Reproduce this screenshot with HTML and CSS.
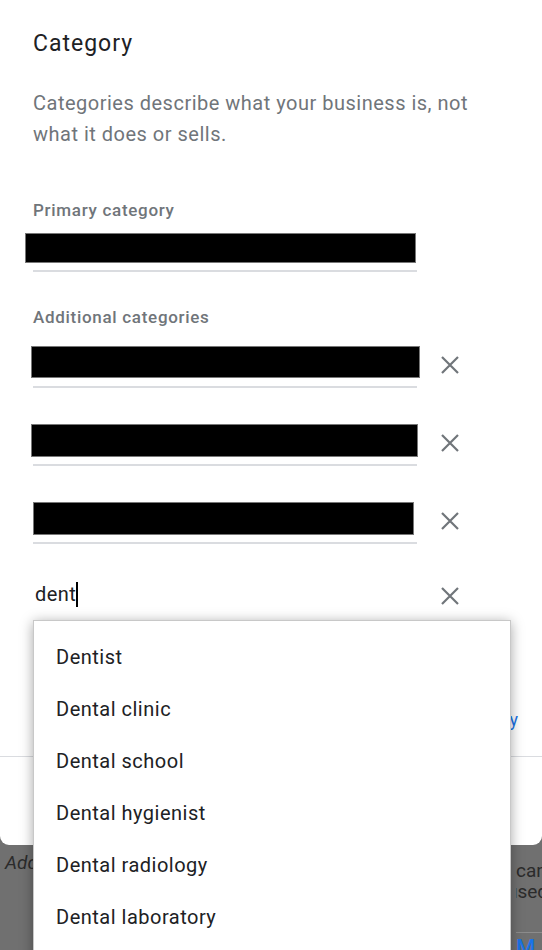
FILE: index.html
```html
<!DOCTYPE html>
<html lang="en">
<head>
  <meta charset="UTF-8" />
  <meta name="viewport" content="width=device-width, initial-scale=1" />
  <title>Category</title>
  <link rel="stylesheet" href="styles.css">
</head>
<body>
  <div class="dialog">
    <h1 class="title">Category</h1>
    <p class="desc">Categories describe what your business is, not what it does or sells.</p>

    <div class="label">Primary category</div>
    <div class="field field-primary">
      <div class="redact redact-primary"></div>
    </div>

    <div class="label label-extra">Additional categories</div>

    <div class="row">
      <div class="field"><div class="redact redact-1"></div></div>
      <button class="remove" title="Remove"><svg width="18" height="18" viewBox="0 0 18 18"><path d="M1 1L17 17M17 1L1 17" /></svg></button>
    </div>
    <div class="row">
      <div class="field"><div class="redact redact-2"></div></div>
      <button class="remove" title="Remove"><svg width="18" height="18" viewBox="0 0 18 18"><path d="M1 1L17 17M17 1L1 17" /></svg></button>
    </div>
    <div class="row">
      <div class="field"><div class="redact redact-3"></div></div>
      <button class="remove" title="Remove"><svg width="18" height="18" viewBox="0 0 18 18"><path d="M1 1L17 17M17 1L1 17" /></svg></button>
    </div>
    <div class="row">
      <div class="field field-input"><span class="typed">dent</span><span class="caret"></span></div>
      <button class="remove remove-input" title="Remove"><svg width="18" height="18" viewBox="0 0 18 18"><path d="M1 1L17 17M17 1L1 17" /></svg></button>
    </div>

    <div class="add-link">Add another category</div>

    <div class="footer">
      <button class="btn">Cancel</button>
      <button class="btn btn-primary">Apply</button>
    </div>

    <ul class="suggestions">
      <li>Dentist</li>
      <li>Dental clinic</li>
      <li>Dental school</li>
      <li>Dental hygienist</li>
      <li>Dental radiology</li>
      <li>Dental laboratory</li>
    </ul>
  </div>

  <div class="behind">
    <div class="behind-left">Add</div>
    <div class="behind-right">
      <div class="line-1">can</div>
      <div class="line-2">used.</div>
      <div class="behind-rule"></div>
      <div class="line-3">M</div>
    </div>
  </div>
</body>
</html>
```

FILE: styles.css
```css
body {
  margin: 0;
  background: #707070;
  font-family: Roboto, "Liberation Sans", sans-serif;
  overflow: hidden;
  height: 950px;
}

.dialog {
  position: relative;
  background: #fff;
  border-radius: 0 0 9px 9px;
  padding: 30px 0 0 33px;
  height: 815px;
}

.title {
  margin: 0;
  font-size: 23px;
  font-weight: 400;
  line-height: 28px;
  letter-spacing: 1px;
  color: #202124;
}

.desc {
  margin: 30px 0 0;
  width: 470px;
  font-size: 20px;
  line-height: 31px;
  letter-spacing: 0.5px;
  color: #70757a;
}

.label {
  margin-top: 50px;
  font-size: 17px;
  font-weight: 500;
  line-height: 20px;
  letter-spacing: 0.7px;
  color: #70757a;
}

.label-extra {
  margin-top: 35px;
}

.field {
  width: 384px;
  height: 40px;
  border-bottom: 2px solid #dadce0;
}

.field-primary {
  margin-top: 13px;
  height: 37px;
}

.redact {
  background: #000;
  border: 1px solid #777;
  box-sizing: border-box;
}

.redact-primary {
  margin-left: -8px;
  width: 391px;
  height: 30px;
}

.redact-1 {
  margin-left: -2px;
  width: 389px;
  height: 32px;
}

.redact-2 {
  margin-left: -2px;
  width: 387px;
  height: 33px;
}

.redact-3 {
  width: 381px;
  height: 33px;
}

.row {
  display: flex;
  align-items: flex-start;
  margin-top: 36px;
}

.label-extra + .row {
  margin-top: 19px;
}

.remove {
  margin-left: 9px;
  width: 48px;
  height: 37px;
  padding: 0;
  border: none;
  background: none;
  display: flex;
  align-items: center;
  justify-content: center;
}

.remove-input {
  height: 31px;
}

.remove svg path {
  stroke: #70757a;
  stroke-width: 2.2;
  fill: none;
}

.field-input {
  display: flex;
  align-items: flex-start;
  padding: 0 0 0 2px;
  box-sizing: border-box;
  height: 42px;
  font-size: 20px;
  line-height: 28px;
  letter-spacing: 0.4px;
  color: #202124;
  border-bottom-color: #cfcfcf;
}

.caret {
  display: inline-block;
  width: 2px;
  height: 25px;
  margin-top: 2px;
  background: #000;
}

.add-link {
  margin-top: 87px;
  width: 485px;
  text-align: right;
  font-size: 18px;
  color: #1a73e8;
}

.footer {
  margin: 26px 0 0 -33px;
  border-top: 1px solid #dadce0;
  display: flex;
  justify-content: flex-end;
  gap: 8px;
  padding: 24px 40px 0 0;
}

.btn {
  font-family: inherit;
  font-size: 16px;
  padding: 10px 20px;
  border: none;
  background: none;
  color: #1a73e8;
}

.btn-primary {
  background: #1a73e8;
  color: #fff;
  border-radius: 4px;
}

.suggestions {
  position: absolute;
  left: 33px;
  top: 620px;
  width: 476px;
  height: 340px;
  margin: 0;
  padding: 10px 0 0;
  list-style: none;
  background: #fff;
  border: 1px solid #c8c8c8;
  box-shadow: 0 2px 12px rgba(0, 0, 0, 0.35);
  z-index: 2;
}

.suggestions li {
  height: 52px;
  line-height: 52px;
  padding-left: 22px;
  font-size: 20px;
  letter-spacing: 0.5px;
  color: #202124;
}

.behind {
  display: flex;
  justify-content: space-between;
  height: 105px;
  color: #2b2b2b;
  font-size: 19px;
}

.behind-left {
  padding: 6px 0 0 5px;
  font-style: italic;
  width: 60px;
}

.behind-right {
  width: 26px;
  overflow: hidden;
  padding-top: 15px;
  line-height: 21px;
}

.line-2 {
  margin-left: -9px;
}

.behind-rule {
  margin-top: 30px;
  border-top: 1px solid #8c8c8c;
}

.line-3 {
  margin-top: 4px;
  color: #1a73e8;
  font-weight: 500;
  font-size: 22px;
}
```
